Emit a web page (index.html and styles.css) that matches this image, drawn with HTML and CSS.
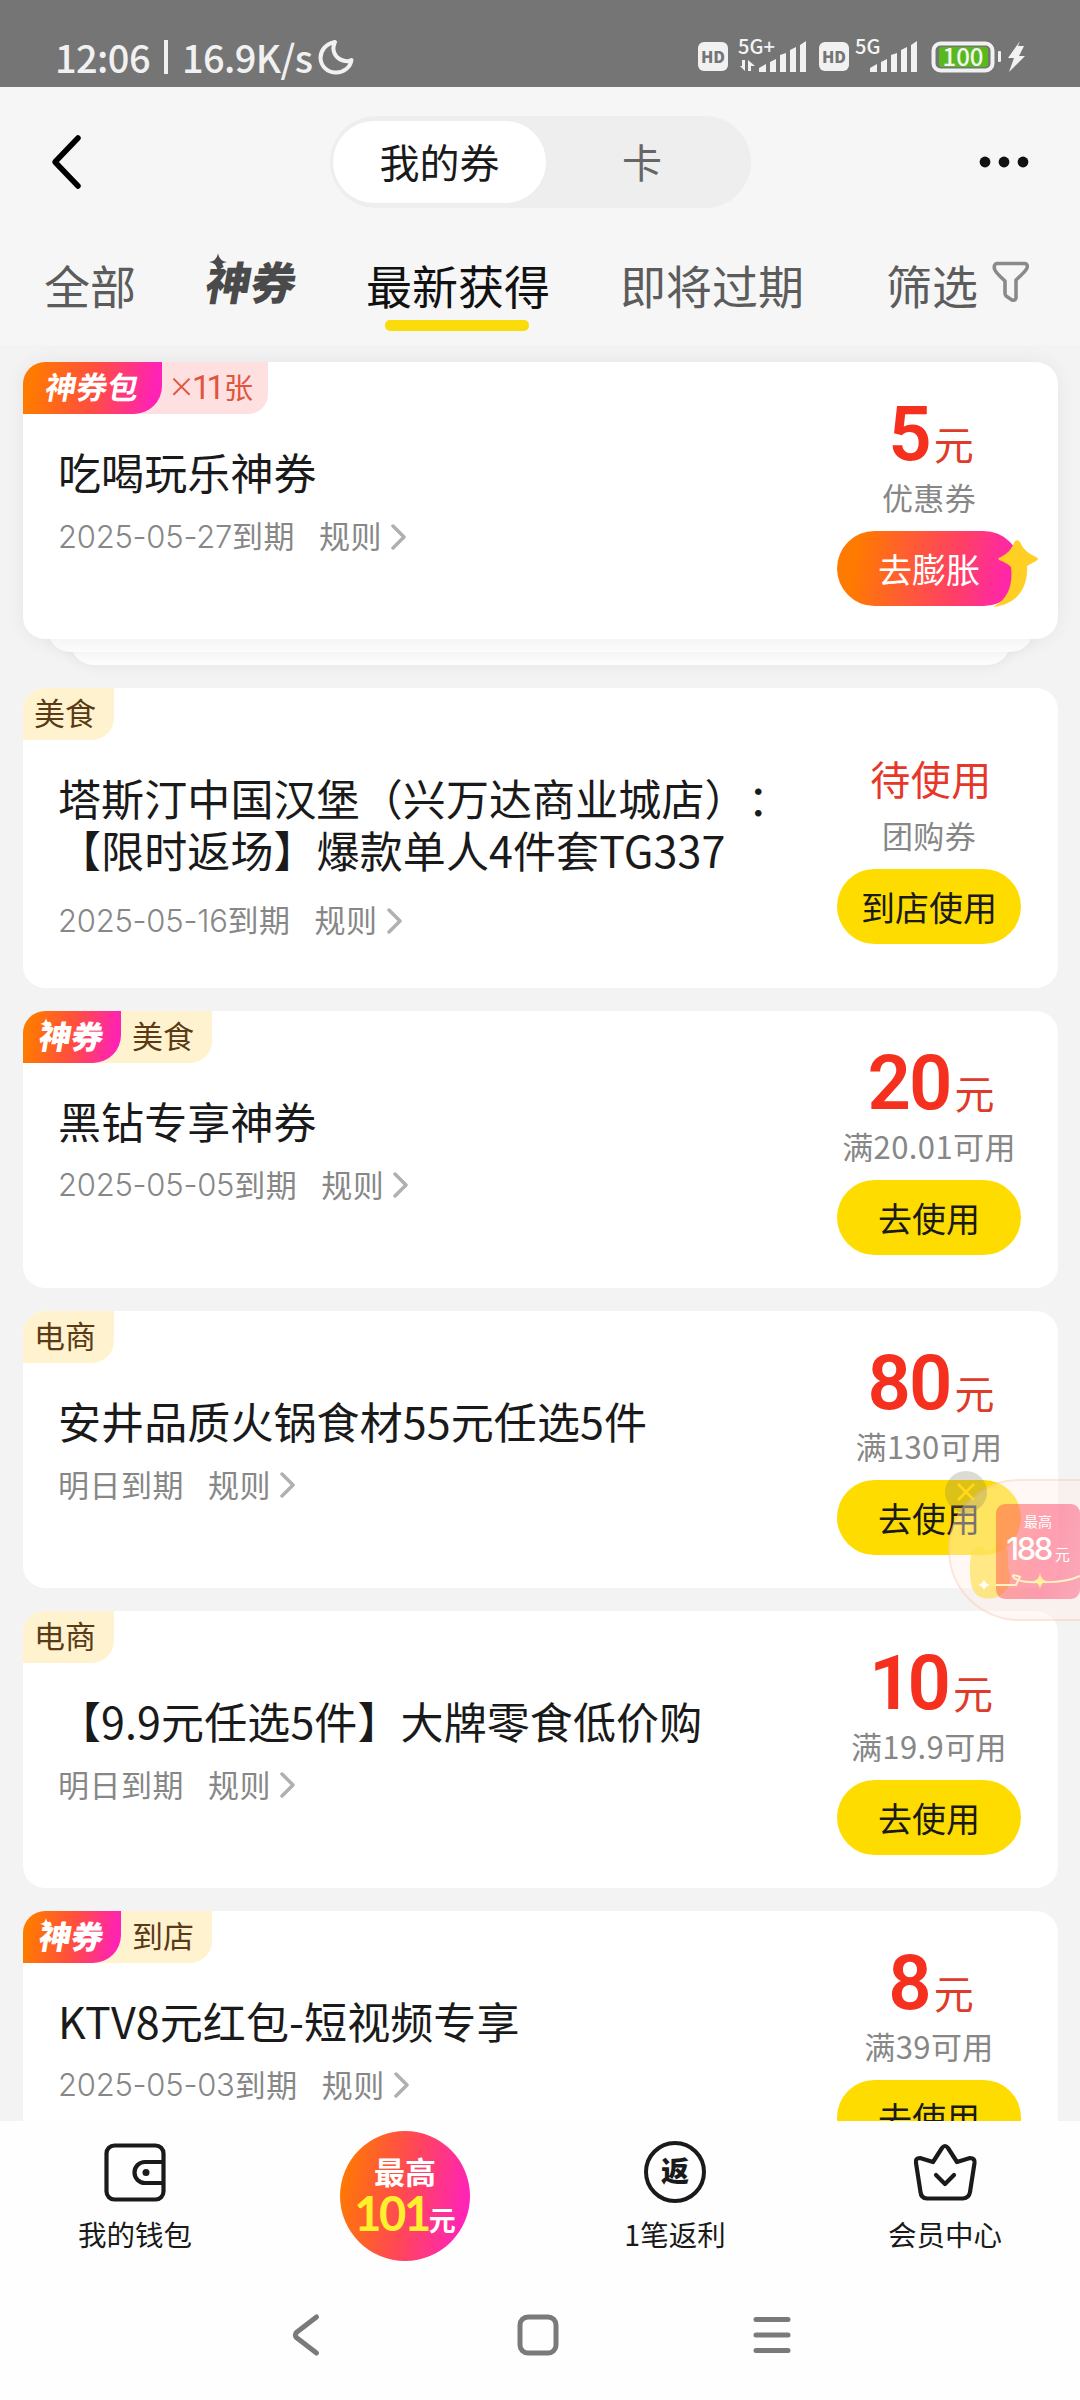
FILE: index.html
```html
<!DOCTYPE html>
<html lang="zh-CN">
<head>
<meta charset="utf-8">
<title>我的券</title>
<link rel="stylesheet" href="styles.css">
</head>
<body>
<div class="screen">
  <header class="status">
    <span class="status-text">12:06</span><i class="status-bar"></i><span class="status-text">16.9K/s</span>
    <svg class="moon" width="36" height="36" viewBox="0 0 36 36"><path d="M17 3C7 5 2.500 12 2.500 19A15 15 0 0 0 17 33.500C26 34 32.500 28 33.500 21C31 22.500 28 22.500 25 21.500C17 19 13 11 17 3Z" fill="none" stroke="#f1f1f1" stroke-width="4" stroke-linejoin="round"/></svg>
    <svg class="signals" width="332" height="40" viewBox="0 0 332 40">
      <g fill="#f1f1f1">
        <rect x="1" y="5" width="30" height="29" rx="6"/><rect x="122" y="5" width="30" height="29" rx="6"/>
        <path d="M62 35V31L69 27V35ZM73 35V25L79 22V35ZM83 35V18L89 16V35ZM93 35V13L99 10V35ZM103 35V8L109 4V35Z"/>
        <path d="M173 35V31L180 27V35ZM184 35V25L190 22V35ZM194 35V18L200 16V35ZM204 35V13L210 10V35ZM214 35V8L220 4V35Z"/>
        <path d="M48 23V34L43 29H45V23ZM51 34V23L58 29H54V34Z"/>
        <rect x="301" y="14" width="3" height="11" rx="1"/>
        <path d="M323 4L311 21H317L312 35L328 19H322L327 9H321Z"/>
      </g>
      <rect x="236.500" y="6.500" width="59" height="27" rx="7" fill="none" stroke="#f1f1f1" stroke-width="4"/>
      <rect x="242" y="10" width="49" height="20" rx="3" fill="#58b91d"/>
      <g class="sig-label">
        <text x="16" y="25.500" fill="#757575" font-size="16" text-anchor="middle">HD</text>
        <text x="137" y="25.500" fill="#757575" font-size="16" text-anchor="middle">HD</text>
        <text x="41" y="17" font-size="20">5G+</text>
        <text x="158" y="17" font-size="20">5G</text>
        <text x="266" y="28.500" font-size="24" text-anchor="middle">100</text>
      </g>
    </svg>
  </header>

  <nav class="topbar">
    <svg width="34" height="56" viewBox="0 0 34 56"><path d="M28 4L5 28L28 52" fill="none" stroke="#000" stroke-width="5.500" stroke-linecap="round" stroke-linejoin="round"/></svg>
    <div class="switch"><span class="switch-on">我的券</span><span class="switch-off">卡</span></div>
    <svg width="50" height="12" viewBox="0 0 50 12" fill="#111"><circle cx="6" cy="6" r="5.400"/><circle cx="25" cy="6" r="5.400"/><circle cx="44" cy="6" r="5.400"/></svg>
  </nav>

  <nav class="tabs">
    <span class="tab tab-all">全部</span>
    <span class="tab tab-logo"><b>神券</b><svg width="18" height="18" viewBox="0 0 18 18"><path d="M9 0Q10 8 18 9Q10 10 9 18Q8 10 0 9Q8 8 9 0Z" fill="#4a4a4a"/></svg></span>
    <span class="tab tab-new">最新获得</span>
    <span class="tab tab-soon">即将过期</span>
    <span class="tab tab-filter">筛选<svg width="38" height="42" viewBox="0 0 38 42"><path d="M5 2.500H33Q36 3 35 7Q34 10 24 19V37Q23 40 20 39L14 35Q13 34 13 32V20Q3 11 2.500 8Q1.500 3 5 2.500Z" fill="none" stroke="#8a8a8a" stroke-width="3.600" stroke-linejoin="round"/></svg></span>
  </nav>

  <main class="list">
    <div class="stack">
      <section class="card">
        <div class="info">
          <div class="tags"><span class="tag-hot tag-pack"><b>神券包</b></span><span class="tag tag-count"><i class="times">×</i><span class="num">11</span>张</span></div>
          <h2 class="title">吃喝玩乐神券</h2>
          <p class="meta"><span class="num">2025-05-27</span>到期<span class="rule">规则</span><svg class="chev" width="16" height="26" viewBox="0 0 16 26"><path d="M2 2L13 13L2 24"/></svg></p>
        </div>
        <div class="side">
          <div class="price"><b>5</b><span>元</span></div>
          <div class="cond">优惠券</div>
          <div class="btn btn-hot">去膨胀<svg class="spark" width="44" height="68" viewBox="0 0 44 68"><path d="M18 1Q21 -1 23 2Q27 12 39 17Q43 19 39 21L30 26C31 46 22 64 -4 67C12 59 16 43 14 27Q10 23 2 20Q0 18 4 17Q14 12 18 1Z" fill="#ffcf24"/></svg></div>
        </div>
      </section>
      <div class="under under-a"></div>
      <div class="under under-b"></div>
    </div>

    <section class="card card-tall">
      <div class="info">
        <div class="tags"><span class="tag">美食</span></div>
        <h2 class="title">塔斯汀中国汉堡（兴万达商业城店）：<br>【限时返场】爆款单人4件套TG337</h2>
        <p class="meta"><span class="num">2025-05-16</span>到期<span class="rule">规则</span><svg class="chev" width="16" height="26" viewBox="0 0 16 26"><path d="M2 2L13 13L2 24"/></svg></p>
      </div>
      <div class="side">
        <div class="price price-text">待使用</div>
        <div class="cond">团购券</div>
        <div class="btn">到店使用</div>
      </div>
    </section>

    <section class="card">
      <div class="info">
        <div class="tags"><span class="tag-hot"><b>神券</b><svg class="tag-star" width="12" height="12" viewBox="0 0 18 18"><path d="M9 0Q10 8 18 9Q10 10 9 18Q8 10 0 9Q8 8 9 0Z" fill="#fff"/></svg></span><span class="tag tag-after">美食</span></div>
        <h2 class="title">黑钻专享神券</h2>
        <p class="meta"><span class="num">2025-05-05</span>到期<span class="rule">规则</span><svg class="chev" width="16" height="26" viewBox="0 0 16 26"><path d="M2 2L13 13L2 24"/></svg></p>
      </div>
      <div class="side">
        <div class="price"><b>20</b><span>元</span></div>
        <div class="cond">满20.01可用</div>
        <div class="btn">去使用</div>
      </div>
    </section>

    <section class="card">
      <div class="info">
        <div class="tags"><span class="tag">电商</span></div>
        <h2 class="title">安井品质火锅食材55元任选5件</h2>
        <p class="meta">明日到期<span class="rule">规则</span><svg class="chev" width="16" height="26" viewBox="0 0 16 26"><path d="M2 2L13 13L2 24"/></svg></p>
      </div>
      <div class="side">
        <div class="price"><b>80</b><span>元</span></div>
        <div class="cond">满130可用</div>
        <div class="btn">去使用</div>
      </div>
    </section>

    <section class="card">
      <div class="info">
        <div class="tags"><span class="tag">电商</span></div>
        <h2 class="title">【9.9元任选5件】大牌零食低价购</h2>
        <p class="meta">明日到期<span class="rule">规则</span><svg class="chev" width="16" height="26" viewBox="0 0 16 26"><path d="M2 2L13 13L2 24"/></svg></p>
      </div>
      <div class="side">
        <div class="price price-narrow"><b>10</b><span>元</span></div>
        <div class="cond">满19.9可用</div>
        <div class="btn">去使用</div>
      </div>
    </section>

    <section class="card">
      <div class="info">
        <div class="tags"><span class="tag-hot"><b>神券</b><svg class="tag-star" width="12" height="12" viewBox="0 0 18 18"><path d="M9 0Q10 8 18 9Q10 10 9 18Q8 10 0 9Q8 8 9 0Z" fill="#fff"/></svg></span><span class="tag tag-after">到店</span></div>
        <h2 class="title">KTV8元红包-短视频专享</h2>
        <p class="meta"><span class="num">2025-05-03</span>到期<span class="rule">规则</span><svg class="chev" width="16" height="26" viewBox="0 0 16 26"><path d="M2 2L13 13L2 24"/></svg></p>
      </div>
      <div class="side">
        <div class="price"><b>8</b><span>元</span></div>
        <div class="cond">满39可用</div>
        <div class="btn">去使用</div>
      </div>
    </section>
  </main>

  <footer class="dock">
    <div class="dock-item">
      <svg width="62" height="62" viewBox="0 0 62 62" fill="none" stroke="#1a1a1a" stroke-width="4.200"><rect x="2.500" y="4.500" width="57" height="54" rx="8"/><path d="M59 21H41A10.500 10.500 0 0 0 41 42H59"/><circle cx="42" cy="31.500" r="3.500" fill="#1a1a1a" stroke="none"/></svg>
      <span>我的钱包</span>
    </div>
    <div class="dock-item"><div class="bonus"><b class="bonus-top">最高</b><div class="bonus-row"><b class="bonus-num">101</b><b class="bonus-unit">元</b></div></div></div>
    <div class="dock-item">
      <div class="ring"><b>返</b></div>
      <span>1笔返利</span>
    </div>
    <div class="dock-item">
      <svg width="64" height="62" viewBox="0 0 64 62" fill="none" stroke="#1a1a1a" stroke-width="4.200" stroke-linejoin="round" stroke-linecap="round"><path d="M29 7Q32 3 35 7L44 21L57 17Q62 17 61.500 22L57 51Q56 57 50 57.500H14Q8 57 7.500 51L3 22Q2 17 7 17L20 21Z"/><path d="M23 34L32 43L41 34"/></svg>
      <span>会员中心</span>
    </div>
  </footer>

  <nav class="sysnav">
    <svg width="30" height="46" viewBox="0 0 30 46"><path d="M25.500 5L6 20Q2.500 23 6 26L25.500 41"/></svg>
    <svg class="sysnav-home" width="46" height="46" viewBox="0 0 46 46"><rect x="5" y="5" width="36" height="36" rx="8"/></svg>
    <svg width="46" height="46" viewBox="0 0 46 46"><path d="M7 7.500H39M7 23H39M7 38.500H39"/></svg>
  </nav>

  <aside class="float">
    <svg class="float-pet" width="46" height="60" viewBox="0 0 46 60"><path d="M4 8Q12 -1 18 8Q23 10 26 5Q35 -3 40 8V24Q48 48 26 55Q6 58 3 40Q0 22 4 8Z" fill="#ffe14a"/></svg>
    <div class="float-card"><span class="float-top">最高</span><span class="float-row"><b>188</b>元</span></div>
    <svg class="float-line" width="110" height="30" viewBox="0 0 110 30"><path d="M26 20H46L50 12Q40 8 44 13Q52 18 70 17Q96 18 110 11" fill="none" stroke="#fff3c4" stroke-width="2"/><path d="M70 8Q71 15 77 16Q71 17 70 24Q69 17 63 16Q69 15 70 8Z" fill="#fff29a"/><path d="M14 14Q15 19 20 20Q15 21 14 25Q13 21 8 20Q13 19 14 14Z" fill="#fff"/></svg>
    <svg class="float-close" width="42" height="42" viewBox="0 0 42 42"><circle cx="21" cy="21" r="21" fill="#7a7a5a" fill-opacity=".27"/><path d="M13 13L29 29M29 13L13 29" stroke="#ffd91a" stroke-width="2.500"/></svg>
  </aside>
</div>
</body>
</html>
```
FILE: styles.css
```css
* { box-sizing: border-box; }
body {
  margin: 0;
  background: #fff;
  font-family: "Noto Sans CJK SC", sans-serif;
  color: #1a1a1a;
}
svg { display: block; flex: none; }
h2, p { margin: 0; font-weight: 400; }
.screen {
  position: relative;
  width: 1080px;
  height: 2400px;
  overflow: hidden;
  display: flex;
  flex-direction: column;
  background: #f3f3f3;
}

/* system status bar */
.status {
  flex: none;
  height: 87px;
  padding: 26px 51px 0 55px;
  display: flex;
  align-items: center;
  background: #757575;
  color: #f1f1f1;
}
.status-text { font: 500 38px/60px "Noto Sans CJK SC", sans-serif; letter-spacing: -.6px; }
.status-bar { width: 4px; height: 34px; margin: 0 14px; background: #f1f1f1; }
.moon { margin-left: 6px; }
.signals { margin-left: auto; overflow: visible; }
.sig-label text { font-family: "Noto Sans CJK SC", sans-serif; font-weight: 500; fill: #f4f4f4; }
.sig-label text[fill] { fill: #757575; font-weight: 900; }

/* title switch */
.topbar {
  flex: none;
  height: 150px;
  padding: 0 51px 0 50px;
  display: flex;
  align-items: center;
  background: #f6f6f6;
}
.switch {
  width: 421px;
  height: 92px;
  margin: 0 auto 0 246px;
  padding: 5px 3px;
  display: flex;
  border-radius: 46px;
  background: #eee;
  font-size: 40px;
  line-height: 80px;
  text-align: center;
}
.switch-on { width: 213px; height: 82px; border-radius: 41px; background: #fff; }
.switch-off { flex: 1; padding-right: 10px; color: #666; }

/* tabs */
.tabs {
  flex: none;
  height: 108px;
  padding: 15px 50px 0 44px;
  display: flex;
  background: #f6f6f6;
  color: #5c5c5c;
  font-size: 46px;
  line-height: 64px;
}
.tab-logo { position: relative; width: 94px; margin-left: 71px; color: #4a4a4a; }
.tab-logo b { display: block; font-weight: 900; font-size: 45px; line-height: 57px; transform: skewX(-10deg); }
.tab-logo svg { position: absolute; left: 2px; top: 1px; }
.tab-new { position: relative; margin-left: 65px; color: #111; }
.tab-new::after {
  content: "";
  position: absolute;
  left: 19px;
  bottom: 14px;
  width: 144px;
  height: 11px;
  border-radius: 5px;
  background: #fadc0c;
}
.tab-soon { margin-left: 70px; }
.tab-filter { margin-left: auto; display: flex; gap: 14px; }
.tab-filter svg { margin-top: 9px; }

/* coupon list */
.list {
  flex: none;
  height: 1776px;
  overflow: hidden;
  padding: 17px 22px 0 23px;
  display: flex;
  flex-direction: column;
  gap: 23px;
}
.card {
  position: relative;
  flex: none;
  height: 277px;
  display: flex;
  justify-content: space-between;
  border-radius: 22px;
  background: #fff;
}
.card-tall { height: 299.5px; }
.stack { flex: none; height: 303px; }
.stack .card { z-index: 3; box-shadow: 0 0 20px rgba(0, 0, 0, .06); }
.under {
  position: relative;
  height: 40px;
  margin-top: -27px;
  border-radius: 0 0 22px 22px;
  background: #fcfcfc;
  box-shadow: 0 2px 14px rgba(0, 0, 0, .05);
}
.under-a { z-index: 2; margin-left: 25px; margin-right: 25px; }
.under-b { z-index: 1; margin-left: 48px; margin-right: 48px; background: #fdfdfd; }

.tags { height: 52px; display: flex; }
.tag {
  height: 52px;
  padding: 0 18px 0 11px;
  border-radius: 22px 0 22px 0;
  background: #fff3cf;
  color: #5b3b16;
  font-size: 31px;
  line-height: 48px;
}
.tag-after { margin-left: -30px; padding-left: 41px; border-radius: 0 0 22px 0; }
.tag-hot {
  position: relative;
  z-index: 1;
  width: 98px;
  height: 52px;
  border-radius: 22px 0 28px 0;
  background: linear-gradient(100deg, #ff7a00 8%, #ff4f3e 50%, #ff22b5 92%);
  color: #fff;
  font-size: 32px;
  line-height: 48px;
  text-align: center;
}
.tag-hot b { display: block; font-weight: 900; transform: skewX(-10deg); }
.tag-star { position: absolute; left: 17px; top: 7px; }
.tag-pack { width: 139px; font-size: 31px; }
.tag-pack b { font-weight: 700; }
.tag-count {
  width: 136px;
  margin-left: -30px;
  padding-left: 40px;
  display: flex;
  border-radius: 0 0 20px 0;
  background: #ffe0e0;
  color: #e05540;
  font-size: 29px;
}
.times { width: 19px; margin-right: 1px; font-style: normal; font-size: 27px; text-indent: -4px; }
.tag-count .num { font: 400 33px/52px Roboto, sans-serif; letter-spacing: -4px; margin-right: 3px; }

.title {
  margin: 31px 0 0 35px;
  font-size: 43px;
  line-height: 52px;
  letter-spacing: .1px;
  white-space: nowrap;
  text-spacing-trim: space-all;
  font-feature-settings: "halt" 0, "chws" 0, "palt" 0;
}
.meta {
  margin: 18px 0 0 35px;
  display: flex;
  align-items: center;
  height: 40px;
  color: #878787;
  font-size: 31px;
  line-height: 40px;
  letter-spacing: .5px;
}
.card-tall .meta { margin-top: 24px; }
.meta .num { font: 300 31px/40px Inter, sans-serif; padding-top: 3px; letter-spacing: -.25px; }
.rule { margin-left: 24px; }
.chev { margin-left: 9px; margin-top: 3px; }
.chev path { fill: none; stroke: #b0b0b0; stroke-width: 3.5; stroke-linecap: round; stroke-linejoin: round; }

.side { width: 184px; margin-right: 37px; padding-top: 32px; }
.card-tall .side { padding-top: 44px; }
.price {
  height: 80px;
  padding-left: 4px;
  display: flex;
  justify-content: center;
  align-items: baseline;
  gap: 4px;
  color: #f5301e;
}
.price b { font: 600 76px/80px Roboto, sans-serif; letter-spacing: -2px; }
.price span { font-size: 40px; line-height: 40px; color: #de3b2a; }
.price-narrow b { letter-spacing: -5px; margin-right: 3px; }
.price-text { font-size: 40px; line-height: 92px; letter-spacing: .5px; color: #e6372a; }
.cond {
  display: flex;
  justify-content: center;
  margin-top: 3px;
  height: 40px;
  color: #878787;
  font-size: 31px;
  line-height: 40px;
  letter-spacing: .4px;
  white-space: nowrap;
}
.btn {
  position: relative;
  height: 75px;
  margin-top: 14px;
  border-radius: 38px;
  background: #ffdc00;
  font-size: 34px;
  line-height: 76px;
  text-align: center;
}
.btn-hot {
  background: linear-gradient(100deg, #ff7a00 12%, #ff3f66 65%, #ff22b5 95%);
  color: #fff;
}
.spark { position: absolute; right: -20px; top: 9px; overflow: visible; }

/* bottom dock */
.dock {
  flex: none;
  height: 160px;
  display: grid;
  grid-template-columns: repeat(4, 270px);
  background: #fefefe;
  font-size: 28.5px;
  line-height: 36px;
}
.dock-item { display: flex; flex-direction: column; align-items: center; padding-top: 20px; }
.dock-item svg, .ring { margin-bottom: 13px; }
.ring {
  width: 62px;
  height: 62px;
  border: 4px solid #1a1a1a;
  border-radius: 50%;
  text-align: center;
  font-size: 28px;
  line-height: 50px;
}
.ring b { font-weight: 900; }
.bonus {
  width: 130px;
  height: 130px;
  margin-top: -10px;
  padding-top: 22px;
  display: flex;
  flex-direction: column;
  align-items: center;
  border-radius: 50%;
  background: linear-gradient(100deg, #ff7a00 5%, #ff4a50 48%, #ff20c0 95%);
  color: #fff;
}
.bonus-top { font-size: 31px; line-height: 36px; }
.bonus-row { display: flex; align-items: baseline; height: 50px; }
.bonus-num { color: #fff02e; font: 700 47px/48px Lato, sans-serif; letter-spacing: -2.5px; }
.bonus-unit { font-size: 27px; line-height: 40px; }

.sysnav {
  flex: none;
  height: 119px;
  padding: 31px 285px 0 291px;
  display: flex;
  justify-content: space-between;
  background: #fefefe;
}
.sysnav svg { fill: none; stroke: #7a7a7a; stroke-width: 5; stroke-linecap: round; stroke-linejoin: round; }
.sysnav-home { margin-left: 6px; }

/* promo that floats over the list */
.float {
  position: absolute;
  left: 948px;
  top: 1479px;
  width: 150px;
  height: 142px;
  border: 2px solid rgba(245, 150, 120, .2);
  border-radius: 71px 0 0 71px;
  background: rgba(255, 238, 232, .42);
  color: #fff;
}
.float-card {
  position: absolute;
  left: 46px;
  top: 23px;
  width: 84px;
  height: 95px;
  padding-top: 6px;
  border-radius: 9px;
  background: linear-gradient(100deg, rgba(255, 90, 70, .5), rgba(255, 70, 110, .5) 60%, rgba(255, 80, 120, .45));
  display: flex;
  flex-direction: column;
  align-items: center;
}
.float-top { font-size: 14px; line-height: 22px; }
.float-row { display: flex; align-items: baseline; font-size: 15px; line-height: 30px; }
.float-row b { font: 500 31px/34px Inter, sans-serif; letter-spacing: -2.5px; margin-right: 4px; }
.float-pet { position: absolute; left: 18px; top: 62px; opacity: .65; }
.float-line { position: absolute; left: 20px; top: 84px; }
.float-close { position: absolute; left: -5px; top: -10px; }
```
